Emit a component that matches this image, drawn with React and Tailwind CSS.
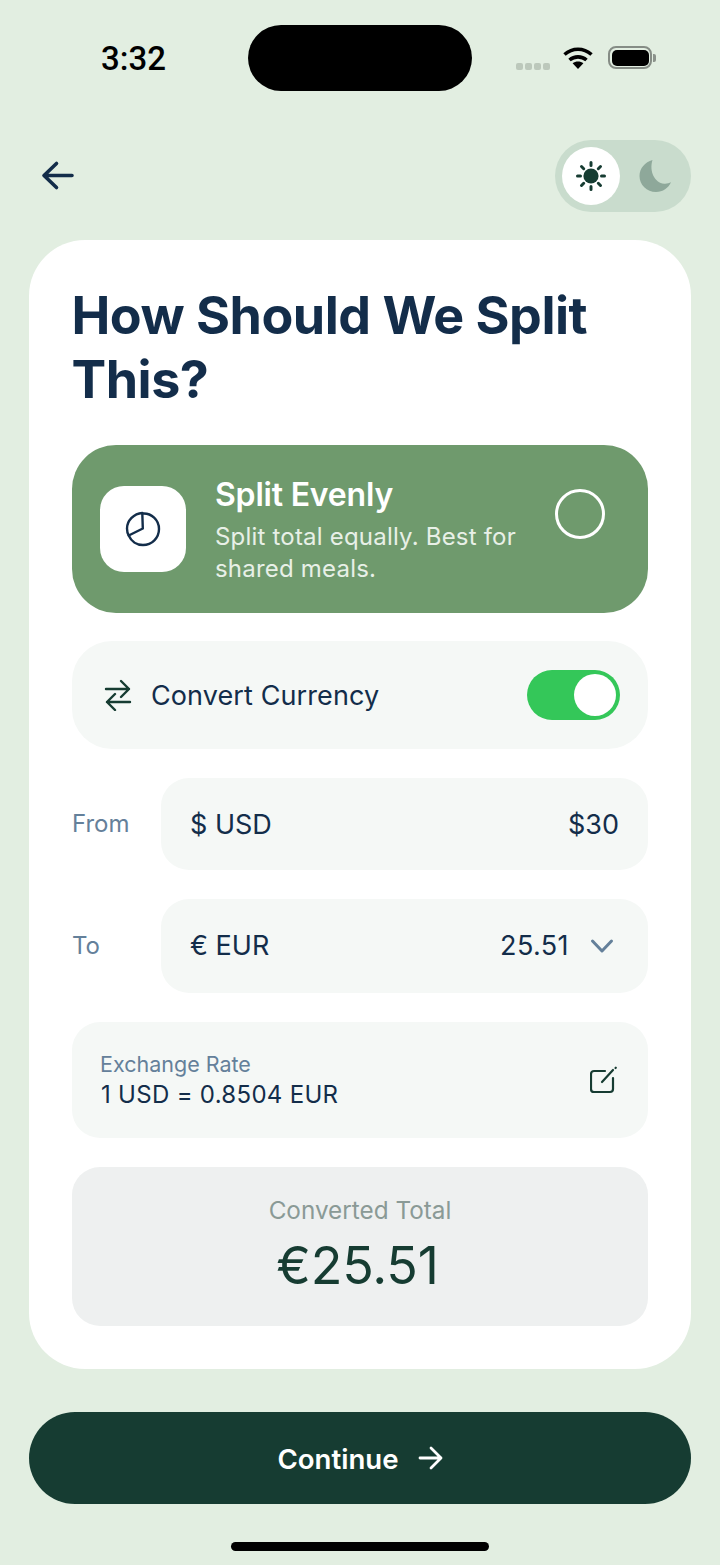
import React from "react";

function Sun() {
  return (
    <svg width="34" height="34" viewBox="0 0 34 34" fill="none" stroke="#163c32" strokeWidth="3" strokeLinecap="round">
      <circle cx="17" cy="17" r="7.600" fill="#163c32" stroke="none" />
      <path d="M17 3.500v3M17 27.500v3M3.500 17h3M27.500 17h3M7.500 7.500l2.200 2.200M24.300 24.300l2.200 2.200M7.500 26.500l2.200-2.200M24.300 9.700l2.200-2.200" />
    </svg>
  );
}

export default function App() {
  return (
    <div className="w-[720px] h-[1565px] bg-[#e2eee1] flex flex-col items-center overflow-hidden font-['Inter',sans-serif] text-[#132d4a]">
      {/* status bar */}
      <div className="w-full h-[91px] mt-[25px] pl-[101px] pr-[65px] flex items-start">
        <div className="w-[147px] h-[66px] shrink-0 flex items-center font-['Roboto',sans-serif] font-medium text-[33px] text-black pt-[1px]">3:32</div>
        <div className="w-[224px] h-[66px] shrink-0 bg-black rounded-[33px]" />
        <div className="ml-[44px] h-[66px] flex-1 flex items-center">
          <div className="flex gap-[2px] mt-[16px]">
            <span className="w-[7px] h-[7px] rounded-[2px] bg-[#bcc8bb]" />
            <span className="w-[7px] h-[7px] rounded-[2px] bg-[#bcc8bb]" />
            <span className="w-[7px] h-[7px] rounded-[2px] bg-[#bcc8bb]" />
            <span className="w-[7px] h-[7px] rounded-[2px] bg-[#bcc8bb]" />
          </div>
          <svg className="ml-[13px] mb-[2px] shrink-0" width="30" height="23" viewBox="0 0 30 23" fill="none" stroke="#000" strokeWidth="3.600">
            <path d="M1.500 8.500C9.500 1.500 20.500 1.500 28.500 8.500" />
            <path d="M6.500 14c4.800-4.200 12.200-4.200 17 0" />
            <path d="M15 23l-5.400-5.800c3-2.300 7.800-2.300 10.800 0z" fill="#000" stroke="none" />
          </svg>
          <div className="ml-[15px] w-[44px] h-[23px] rounded-[8px] border-2 border-[#858c85] p-[1.5px] mb-[1px] shrink-0">
            <div className="w-full h-full rounded-[5px] bg-black" />
          </div>
          <div className="w-[3px] h-[8px] rounded-r-[2px] bg-[#8b928b] ml-[1px] shrink-0" />
        </div>
      </div>

      {/* header */}
      <div className="w-full h-[72px] mt-[24px] px-[29px] flex items-center justify-between">
        <svg className="ml-[12px]" width="34" height="34" viewBox="0 0 34 34" fill="none" stroke="#132d4a" strokeWidth="3.600" strokeLinecap="round" strokeLinejoin="round">
          <path d="M31 16.500H3M15.500 4.500L3 16.500l12.500 12" />
        </svg>
        <div className="w-[136px] h-[72px] rounded-[36px] bg-[#c9dccd] pl-[7px] flex items-center">
          <div className="w-[58px] h-[58px] rounded-full bg-white flex items-center justify-center"><Sun /></div>
          <svg className="ml-[17px]" width="36" height="36" viewBox="0 0 36 36">
            <path d="M15.500 2C8 4 2.500 10.400 2.500 18c0 8.800 7.300 16 16.500 16 6.800 0 12.500-3.900 15-9.700-1.700 1.100-4.600 1.600-6.800 1.400C17.500 25 12 13 15.500 2z" fill="#8ea89a" />
          </svg>
        </div>
      </div>

      {/* card */}
      <div className="w-[662px] h-[1129px] mt-[28px] rounded-[56px] bg-white pt-[44px] px-[43px] flex flex-col">
        <h1 className="text-[52px] leading-[64px] font-bold tracking-[-0.5px] -ml-[0.5px]">How Should We Split This?</h1>

        <div className="mt-[33px] h-[168px] rounded-[44px] bg-[#6f9a6d] pl-[28px] pr-[43px] flex items-center text-white">
          <div className="w-[86px] h-[86px] rounded-[24px] bg-white flex items-center justify-center shrink-0">
            <svg width="36" height="36" viewBox="0 0 36 36" fill="none" stroke="#132d4a" strokeWidth="2.400" strokeLinejoin="round" strokeLinecap="round">
              <path d="M17.500 2.500 C26.500 1.800 34 9 34 18c0 8.800-7 16-16 16-6.300 0-11.800-3.800-14.300-9.500" />
              <path d="M17.300 2C9 2.500 2 9.500 2 17.500c0 2.500.6 5 1.700 7L17.800 17.500z" />
            </svg>
          </div>
          <div className="ml-[29px] flex-1 pt-[2px]">
            <div className="text-[32px] leading-[38px] font-semibold tracking-[-0.2px]">Split Evenly</div>
            <div className="mt-[7px] text-[24px] leading-[32px] text-[#e8f0e7] tracking-[0.2px] w-[310px]">Split total equally. Best for shared meals.</div>
          </div>
          <div className="w-[50px] h-[50px] rounded-full border-[3px] border-white shrink-0 -mt-[30px]" />
        </div>

        <div className="mt-[28px] h-[108px] rounded-[40px] bg-[#f5f8f6] pl-[32px] pr-[28px] flex items-center">
          <svg width="28" height="32" viewBox="0 0 28 32" fill="none" stroke="#163c32" strokeWidth="2.400" strokeLinecap="round" strokeLinejoin="round">
            <path d="M2 10H25M17 2l8 8-8 8" />
            <path d="M26 23H3M11 15l-8 8 8 8" />
          </svg>
          <span className="ml-[19px] text-[27px] leading-[36px] pt-[2px] tracking-[0.1px] flex-1">Convert Currency</span>
          <div className="w-[93px] h-[50px] rounded-[25px] bg-[#34c759] p-[4px] flex justify-end">
            <div className="w-[42px] h-[42px] rounded-full bg-white" />
          </div>
        </div>

        <div className="mt-[29px] flex items-center">
          <span className="w-[89px] text-[24px] text-[#64809a]">From</span>
          <div className="flex-1 h-[92px] rounded-[28px] bg-[#f5f8f6] pl-[30px] pr-[29px] flex items-center justify-between text-[27px] leading-[36px]">
            <span className="pt-[2px] -ml-[1px]">$ USD</span>
            <span className="pt-[2px]">$30</span>
          </div>
        </div>

        <div className="mt-[29px] flex items-center">
          <span className="w-[89px] text-[24px] text-[#64809a]">To</span>
          <div className="flex-1 h-[94px] rounded-[28px] bg-[#f5f8f6] pl-[30px] pr-[34px] flex items-center text-[27px] leading-[36px]">
            <span className="flex-1 -ml-[1px]">€ EUR</span>
            <span className="tracking-[0.4px]">25.51</span>
            <svg className="ml-[21px]" width="24" height="16" viewBox="0 0 24 16" fill="none" stroke="#64809a" strokeWidth="3" strokeLinecap="round" strokeLinejoin="round">
              <path d="M2.500 3L12 13l9.500-10" />
            </svg>
          </div>
        </div>

        <div className="mt-[29px] h-[116px] rounded-[28px] bg-[#f5f8f6] pl-[29px] pr-[28px] flex items-center justify-between">
          <div>
            <div className="text-[21.500px] leading-[28px] text-[#64809a] -ml-[1px]">Exchange Rate</div>
            <div className="text-[24px] leading-[32px] tracking-[0.3px] pt-[1px]">1 USD = 0.8504 EUR</div>
          </div>
          <svg width="30" height="30" viewBox="0 0 30 30" fill="none" stroke="#163c32" strokeWidth="2.200" strokeLinecap="round" strokeLinejoin="round">
            <path d="M15 6H4a3 3 0 0 0-3 3v15a3 3 0 0 0 3 3h16a3 3 0 0 0 3-3V13" />
            <path d="M12 17L23 5M25.500 3l.3-.3" />
          </svg>
        </div>

        <div className="mt-[29px] h-[159px] rounded-[28px] bg-[#eef0f0] flex flex-col items-center pt-[25px]">
          <div className="text-[24.300px] leading-[36px] text-[#8a9a96]">Converted Total</div>
          <div className="mt-[5px] pr-[5px] text-[52px] leading-[66px] text-[#163c32] tracking-[-0.2px]">€25.51</div>
        </div>
      </div>

      {/* button */}
      <div className="mt-[43px] w-[662px] h-[92px] rounded-[46px] bg-[#163c32] flex items-center justify-center text-white text-[27.600px] leading-[36px] font-semibold">
        <span className="pt-[1px]">Continue</span>
        <svg className="ml-[19px]" width="25" height="24" viewBox="0 0 25 24" fill="none" stroke="#fff" strokeWidth="2.800" strokeLinecap="round" strokeLinejoin="round">
          <path d="M2 12h21M13 2l10 10-10 10" />
        </svg>
      </div>

      <div className="mt-[38px] w-[258px] h-[9px] rounded-full bg-black" />
    </div>
  );
}
